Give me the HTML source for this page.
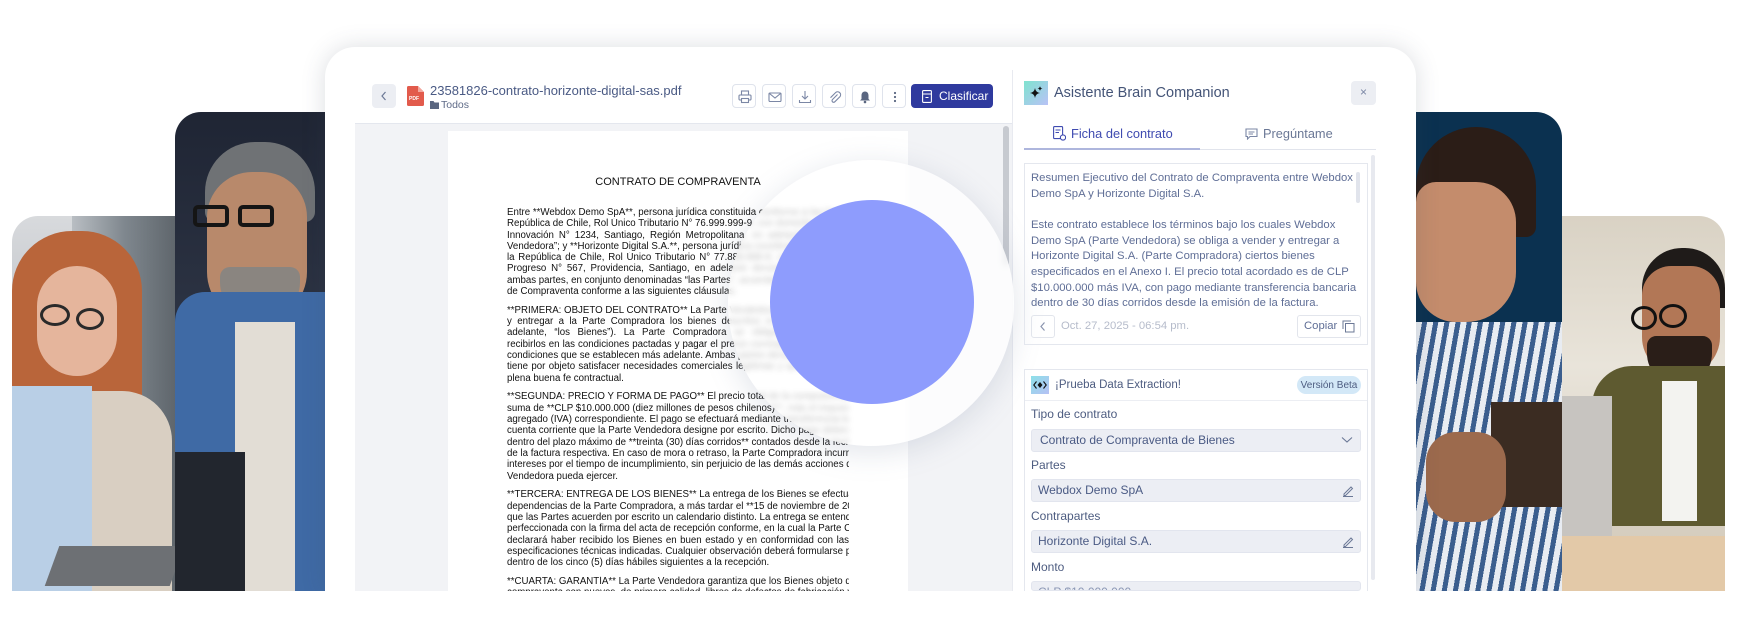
<!DOCTYPE html>
<html><head><meta charset="utf-8">
<style>
*{box-sizing:border-box;margin:0;padding:0}
html,body{width:1739px;height:637px;overflow:hidden}
body{background:#fff;position:relative;font-family:"Liberation Sans",Arial,sans-serif}
.abs{position:absolute}
.photo{position:absolute;overflow:hidden}
.card{position:absolute;left:325px;top:47px;width:1091px;height:544px;background:#fff;border-radius:30px 30px 0 0;box-shadow:0 0 24px rgba(60,70,90,.18)}
.ib{position:absolute;top:84px;width:24px;height:24px;border:1px solid #dfe3ec;border-radius:4px;background:#fff}
.ib svg{position:absolute;left:5px;top:5px}
.doc{font-family:"Liberation Sans",Arial,sans-serif;font-size:9.7px;color:#111;line-height:11.3px}
.doc div{white-space:nowrap;text-align:justify;text-align-last:justify;width:342px;height:11.3px;overflow:hidden}
.doc div.l{text-align-last:left}
.doc .gap{height:7.5px}
.sum{font-size:11.3px;color:#5f6e96;line-height:15.65px;white-space:nowrap}
.lbl{position:absolute;left:1031px;font-size:12px;color:#4d5c80}
.inp{position:absolute;left:1031px;width:330px;height:23px;background:#eceef4;border:1px solid #e2e5ee;border-radius:3px;font-size:12px;color:#4a5a84;padding-left:6px;line-height:21px}
</style></head><body>

<!-- left woman -->
<div class="photo" style="left:12px;top:216px;width:165px;height:375px;border-radius:26px 0 0 0;background:linear-gradient(180deg,#d8dadd 0%,#c9ccd0 20%,#a9aeb4 40%,#8c9096 100%)">
  <div class="abs" style="left:60px;top:0;width:105px;height:375px;background:linear-gradient(90deg,#b9bec3,#7f878e 50%,#5e656b)"></div>
  <div class="abs" style="left:0;top:15px;width:130px;height:230px;border-radius:60px 60px 30px 30px;background:#b9653a"></div>
  <div class="abs" style="left:25px;top:50px;width:80px;height:110px;border-radius:40px;background:#e5b59c"></div>
  <div class="abs" style="left:28px;top:88px;width:30px;height:22px;border:3px solid #2a2a2a;border-radius:50%"></div>
  <div class="abs" style="left:64px;top:92px;width:28px;height:22px;border:3px solid #2a2a2a;border-radius:50%"></div>
  <div class="abs" style="left:0;top:175px;width:160px;height:200px;border-radius:40px 50px 0 0;background:#d9cfc2"></div>
  <div class="abs" style="left:0;top:170px;width:80px;height:205px;background:#b9cfe6"></div>
  <div class="abs" style="left:40px;top:330px;width:125px;height:40px;background:#6d7074;transform:skewX(-20deg)"></div>
</div>
<!-- man -->
<div class="photo" style="left:175px;top:112px;width:150px;height:479px;border-radius:26px 0 0 0;background:linear-gradient(180deg,#1f2534,#2b3242 40%,#2c3446)">
  <div class="abs" style="left:30px;top:30px;width:110px;height:80px;border-radius:50px 50px 10px 10px;background:#6f7275"></div>
  <div class="abs" style="left:32px;top:60px;width:100px;height:150px;border-radius:45px 45px 50px 50px;background:#b8896b"></div>
  <div class="abs" style="left:45px;top:155px;width:80px;height:55px;border-radius:10px 10px 40px 40px;background:#8a8580"></div>
  <div class="abs" style="left:18px;top:93px;width:36px;height:22px;border:4px solid #151515;border-radius:5px"></div>
  <div class="abs" style="left:63px;top:93px;width:36px;height:22px;border:4px solid #151515;border-radius:5px"></div>
  <div class="abs" style="left:0;top:180px;width:150px;height:299px;background:#3f6aa5;border-radius:30px 0 0 0"></div>
  <div class="abs" style="left:60px;top:210px;width:60px;height:269px;background:#e2ddd5"></div>
  <div class="abs" style="left:0;top:340px;width:70px;height:139px;background:#22262e"></div>
</div>
<!-- right woman -->
<div class="photo" style="left:1416px;top:112px;width:146px;height:479px;border-radius:0 26px 0 0;background:#0b3150">
  <div class="abs" style="left:0;top:15px;width:120px;height:110px;border-radius:60px 60px 10px 10px;background:#2b1d17"></div>
  <div class="abs" style="left:0;top:70px;width:100px;height:140px;border-radius:20px 40px 50px 40px;background:#c48c6c"></div>
  <div class="abs" style="left:0;top:210px;width:146px;height:269px;background:repeating-linear-gradient(100deg,#e8ecf2 0 6px,#3b5e8e 6px 11px)"></div>
  <div class="abs" style="left:75px;top:290px;width:71px;height:105px;background:#3b2c22"></div>
  <div class="abs" style="left:10px;top:320px;width:80px;height:90px;border-radius:30px;background:#9c6a4d"></div>
</div>
<!-- right man -->
<div class="photo" style="left:1562px;top:216px;width:163px;height:375px;border-radius:0 26px 0 0;background:linear-gradient(180deg,#d9d2c4,#e9e4da 40%,#cfc6b6)">
  <div class="abs" style="left:80px;top:32px;width:83px;height:60px;border-radius:40px 40px 0 0;background:#1f1b19"></div>
  <div class="abs" style="left:80px;top:50px;width:78px;height:110px;border-radius:30px 30px 40px 40px;background:#b27756"></div>
  <div class="abs" style="left:85px;top:120px;width:65px;height:50px;border-radius:10px 10px 35px 35px;background:#2a1e18"></div>
  <div class="abs" style="left:69px;top:90px;width:26px;height:24px;border:3px solid #111;border-radius:50%"></div>
  <div class="abs" style="left:97px;top:88px;width:28px;height:24px;border:3px solid #111;border-radius:50%"></div>
  <div class="abs" style="left:30px;top:150px;width:133px;height:160px;border-radius:40px 0 0 0;background:#5e5a30"></div>
  <div class="abs" style="left:100px;top:165px;width:35px;height:140px;background:#f3f3f0"></div>
  <div class="abs" style="left:0;top:180px;width:50px;height:150px;background:#c7c4c0"></div>
  <div class="abs" style="left:0;top:320px;width:163px;height:55px;background:#e3c9a8"></div>
</div>

<div class="card"></div>

<!-- header left -->
<div class="abs" style="left:372px;top:84px;width:24px;height:24px;background:#eceef3;border-radius:4px"></div>
<svg class="abs" style="left:379px;top:90px" width="10" height="12"><path d="M6.5 2 L3 6 L6.5 10" stroke="#6b7896" stroke-width="1.2" fill="none"/></svg>
<svg class="abs" style="left:407px;top:86px" width="17" height="20"><path d="M0 1.5Q0 0 1.5 0H11L17 6V18.5Q17 20 15.5 20H1.5Q0 20 0 18.5Z" fill="#e25b4c"/><path d="M11 0V6H17" fill="#f3a79d"/><text x="2" y="14" font-size="5" fill="#fff" font-family="Liberation Sans" font-weight="bold">PDF</text></svg>
<div class="abs" style="left:430px;top:83px;font-size:13px;color:#4a5a84;white-space:nowrap">23581826-contrato-horizonte-digital-sas.pdf</div>
<svg class="abs" style="left:430px;top:101px" width="9" height="8"><path d="M0 0H3.5L4.5 1.5H9V8H0Z" fill="#5a6680"/></svg>
<div class="abs" style="left:441px;top:99px;font-size:10.5px;color:#5f6b88">Todos</div>

<div class="ib" style="left:732px"><svg width="14" height="14"><rect x="3.5" y="1" width="7" height="4" fill="none" stroke="#7b87a5" stroke-width="1.1"/><rect x="1" y="5" width="12" height="5" rx="1" fill="none" stroke="#7b87a5" stroke-width="1.1"/><rect x="3.5" y="8.5" width="7" height="4" fill="#fff" stroke="#7b87a5" stroke-width="1.1"/></svg></div>
<div class="ib" style="left:762px"><svg width="14" height="14"><rect x="1" y="3" width="12" height="8.5" rx="1" fill="none" stroke="#7b87a5" stroke-width="1.1"/><path d="M1.5 3.5L7 8L12.5 3.5" fill="none" stroke="#7b87a5" stroke-width="1.1"/></svg></div>
<div class="ib" style="left:792px"><svg width="14" height="14"><path d="M7 1V9M4 6L7 9L10 6M1.5 10V12.5H12.5V10" fill="none" stroke="#7b87a5" stroke-width="1.1"/></svg></div>
<div class="ib" style="left:822px"><svg width="14" height="14"><path d="M9.5 4.5L4.5 9.5a1.6 1.6 0 0 0 2.3 2.3L12 6.6a3 3 0 0 0-4.2-4.2L2.5 7.7" fill="none" stroke="#7b87a5" stroke-width="1.1"/></svg></div>
<div class="ib" style="left:852px"><svg width="14" height="14"><path d="M7 1.5C4.5 1.5 3.5 3.5 3.5 5.5V9L2 10.5H12L10.5 9V5.5C10.5 3.5 9.5 1.5 7 1.5Z" fill="#5a6680"/><circle cx="7" cy="12" r="1.3" fill="#5a6680"/></svg></div>
<div class="ib" style="left:882px"><svg width="14" height="14"><circle cx="7" cy="3" r="1.1" fill="#5a6680"/><circle cx="7" cy="7" r="1.1" fill="#5a6680"/><circle cx="7" cy="11" r="1.1" fill="#5a6680"/></svg></div>
<div class="abs" style="left:911px;top:84px;width:82px;height:24px;background:#2f3a9e;border-radius:4px"></div>
<svg class="abs" style="left:922px;top:90px" width="10" height="13"><rect x="0.6" y="0.6" width="8.8" height="11.8" rx="1" fill="none" stroke="#fff" stroke-width="1.1"/><path d="M0.6 4H9.4M3.5 7.5H6.5" stroke="#fff" stroke-width="1.1"/></svg>
<div class="abs" style="left:939px;top:89px;font-size:12px;color:#fff">Clasificar</div>

<!-- divider -->
<div class="abs" style="left:355px;top:123px;width:657px;height:1px;background:#e4e7ee"></div>
<div class="abs" style="left:1012px;top:70px;width:1px;height:521px;background:#e8eaf0"></div>

<!-- doc area -->
<div class="abs" style="left:355px;top:124px;width:657px;height:467px;background:#f2f3f6"></div>
<div class="abs" style="left:1003px;top:126px;width:6px;height:140px;background:#c7cad0;border-radius:3px"></div>
<div class="abs" style="left:448px;top:131px;width:460px;height:460px;background:#fff"></div>
<div class="abs" style="left:448px;top:176px;width:460px;text-align:center;font-size:11px;color:#111">CONTRATO DE COMPRAVENTA</div>
<div class="abs doc" style="left:507px;top:207px">
<div>Entre **Webdox Demo SpA**, persona jurídica constituida conforme a las leyes de la</div>
<div>República de Chile, Rol Único Tributario N° 76.999.999-9, con domicilio en Avenida</div>
<div>Innovación N° 1234, Santiago, Región Metropolitana, en adelante la “Parte</div>
<div>Vendedora”; y **Horizonte Digital S.A.**, persona jurídica constituida conforme a</div>
<div>la República de Chile, Rol Único Tributario N° 77.888.888-8, con domicilio en</div>
<div>Progreso N° 567, Providencia, Santiago, en adelante denominada la “Parte</div>
<div>ambas partes, en conjunto denominadas “las Partes”, acuerdan celebrar el presente</div>
<div class="l">de Compraventa conforme a las siguientes cláusulas.</div>
<div class="gap"></div>
<div>**PRIMERA: OBJETO DEL CONTRATO** La Parte Vendedora se obliga a vender</div>
<div>y entregar a la Parte Compradora los bienes descritos en el Anexo I (en</div>
<div>adelante, “los Bienes”). La Parte Compradora se obliga, a su vez, a</div>
<div>recibirlos en las condiciones pactadas y pagar el precio correspondiente en las</div>
<div>condiciones que se establecen más adelante. Ambas partes declaran que el contrato</div>
<div>tiene por objeto satisfacer necesidades comerciales legítimas y que actúan de</div>
<div class="l">plena buena fe contractual.</div>
<div class="gap"></div>
<div>**SEGUNDA: PRECIO Y FORMA DE PAGO** El precio total de la compraventa asciende a la</div>
<div>suma de **CLP $10.000.000 (diez millones de pesos chilenos)**, más el impuesto al valor</div>
<div>agregado (IVA) correspondiente. El pago se efectuará mediante transferencia bancaria a la</div>
<div>cuenta corriente que la Parte Vendedora designe por escrito. Dicho pago deberá realizarse</div>
<div>dentro del plazo máximo de **treinta (30) días corridos** contados desde la fecha de emisión</div>
<div>de la factura respectiva. En caso de mora o retraso, la Parte Compradora incurrirá en</div>
<div>intereses por el tiempo de incumplimiento, sin perjuicio de las demás acciones que la Parte</div>
<div class="l">Vendedora pueda ejercer.</div>
<div class="gap"></div>
<div>**TERCERA: ENTREGA DE LOS BIENES** La entrega de los Bienes se efectuará en las</div>
<div>dependencias de la Parte Compradora, a más tardar el **15 de noviembre de 2024**, salvo</div>
<div>que las Partes acuerden por escrito un calendario distinto. La entrega se entenderá</div>
<div>perfeccionada con la firma del acta de recepción conforme, en la cual la Parte Compradora</div>
<div>declarará haber recibido los Bienes en buen estado y en conformidad con las</div>
<div>especificaciones técnicas indicadas. Cualquier observación deberá formularse por escrito</div>
<div class="l">dentro de los cinco (5) días hábiles siguientes a la recepción.</div>
<div class="gap"></div>
<div>**CUARTA: GARANTÍA** La Parte Vendedora garantiza que los Bienes objeto de la presente</div>
<div>compraventa son nuevos, de primera calidad, libres de defectos de fabricación y de cualquier</div>
</div>
<!-- halo & blur -->
<div class="abs" style="left:728px;top:160px;width:286px;height:286px;border-radius:50%;background:rgba(255,255,255,.72);box-shadow:0 6px 30px rgba(120,130,160,.22);backdrop-filter:blur(3px)"></div>
<div class="abs" style="left:770px;top:200px;width:204px;height:204px;border-radius:50%;background:#8e9cfd"></div>

<!-- right panel -->
<div class="abs" style="left:1024px;top:81px;width:24px;height:24px;background:linear-gradient(135deg,#7fe3cf,#b9c2f6)"></div>
<svg class="abs" style="left:1028px;top:85px" width="16" height="16"><path d="M7 3Q7.6 7.4 12 8Q7.6 8.6 7 13Q6.4 8.6 2 8Q6.4 7.4 7 3Z" fill="#111"/><path d="M12 1Q12.3 3.2 14.5 3.5Q12.3 3.8 12 6Q11.7 3.8 9.5 3.5Q11.7 3.2 12 1Z" fill="#111"/></svg>
<div class="abs" style="left:1054px;top:85px;font-size:14.5px;color:#445477;white-space:nowrap">Asistente Brain Companion</div>
<div class="abs" style="left:1351px;top:81px;width:25px;height:24px;background:#eceef3;border-radius:4px;text-align:center;font-size:12px;line-height:23px;color:#7b87a5">×</div>

<svg class="abs" style="left:1053px;top:126px" width="13" height="15"><rect x="0.6" y="0.6" width="9" height="12" rx="1" fill="none" stroke="#3f4bb0" stroke-width="1.1"/><path d="M2.5 4H7.5M2.5 6.5H6" stroke="#3f4bb0" stroke-width="1.1"/><circle cx="10" cy="11.5" r="2.6" fill="#fff" stroke="#3f4bb0" stroke-width="1.1"/></svg>
<div class="abs" style="left:1071px;top:126px;font-size:12.8px;color:#3f4bb0">Ficha del contrato</div>
<svg class="abs" style="left:1245px;top:128px" width="13" height="12"><path d="M1 1H12V8.5H5L2.5 11V8.5H1Z" fill="none" stroke="#7b87a5" stroke-width="1.1"/><path d="M3.5 4H9.5M3.5 6H8" stroke="#7b87a5" stroke-width="1"/></svg>
<div class="abs" style="left:1263px;top:126px;font-size:12.8px;color:#6b7896">Pregúntame</div>
<div class="abs" style="left:1024px;top:149px;width:352px;height:1px;background:#e1e4ec"></div>
<div class="abs" style="left:1024px;top:148px;width:176px;height:2px;background:#aeb6dd"></div>
<div class="abs" style="left:1371px;top:155px;width:4px;height:425px;background:#e7e9ef;border-radius:2px"></div>

<div class="abs" style="left:1024px;top:163px;width:344px;height:182px;border:1px solid #e4e7ee"></div>
<div class="abs" style="left:1356px;top:172px;width:4px;height:31px;background:#e1e4ec;border-radius:2px"></div>
<div class="abs sum" style="left:1031px;top:171px">Resumen Ejecutivo del Contrato de Compraventa entre Webdox<br>Demo SpA y Horizonte Digital S.A.<br><br>Este contrato establece los términos bajo los cuales Webdox<br>Demo SpA (Parte Vendedora) se obliga a vender y entregar a<br>Horizonte Digital S.A. (Parte Compradora) ciertos bienes<br>especificados en el Anexo I. El precio total acordado es de CLP<br>$10.000.000 más IVA, con pago mediante transferencia bancaria<br>dentro de 30 días corridos desde la emisión de la factura.</div>
<div class="abs" style="left:1031px;top:315px;width:24px;height:23px;border:1px solid #e2e5ec;border-radius:3px"></div>
<svg class="abs" style="left:1038px;top:321px" width="10" height="12"><path d="M6.5 1.5L3 5.5L6.5 9.5" stroke="#8a94ae" stroke-width="1.2" fill="none"/></svg>
<div class="abs" style="left:1061px;top:320px;font-size:11.3px;color:#b6bccb;white-space:nowrap">Oct. 27, 2025 - 06:54 pm.</div>
<div class="abs" style="left:1297px;top:315px;width:64px;height:23px;border:1px solid #e2e5ec;border-radius:3px"></div>
<div class="abs" style="left:1304px;top:320px;font-size:11.3px;color:#5f6e96">Copiar</div>
<svg class="abs" style="left:1342px;top:320px" width="13" height="13"><path d="M1 9V1H9" fill="none" stroke="#6b7896" stroke-width="1"/><rect x="3.5" y="3.5" width="8.5" height="8.5" fill="none" stroke="#6b7896" stroke-width="1"/></svg>

<div class="abs" style="left:1024px;top:369px;width:344px;height:222px;border:1px solid #e4e7ee;border-bottom:none"></div>
<div class="abs" style="left:1031px;top:376px;width:18px;height:18px;background:linear-gradient(135deg,#8ce0e8,#b6c0f4)"></div>
<svg class="abs" style="left:1033px;top:380px" width="14" height="10"><path d="M3.5 1.5L0.8 5L3.5 8.5M10.5 1.5L13.2 5L10.5 8.5" fill="none" stroke="#111" stroke-width="1.1"/><path d="M7 2L9.5 5L7 8L4.5 5Z" fill="#111"/></svg>
<div class="abs" style="left:1055px;top:379px;font-size:11.5px;color:#4d5c80">¡Prueba Data Extraction!</div>
<div class="abs" style="left:1297px;top:376px;width:64px;height:18px;background:#d3e8f7;border-radius:9px;font-size:10px;color:#4d5c80;text-align:center;line-height:19px">Versión Beta</div>
<div class="abs" style="left:1025px;top:400px;width:342px;height:1px;background:#eceef3"></div>
<div class="lbl" style="top:407px">Tipo de contrato</div>
<div class="inp" style="top:429px;padding-left:8px">Contrato de Compraventa de Bienes</div>
<svg class="abs" style="left:1341px;top:436px" width="12" height="8"><path d="M1 1.5L6 6L11 1.5" fill="none" stroke="#6b7896" stroke-width="1.1"/></svg>
<div class="lbl" style="top:458px">Partes</div>
<div class="inp" style="top:479px">Webdox Demo SpA</div>
<div class="lbl" style="top:509px">Contrapartes</div>
<div class="inp" style="top:530px">Horizonte Digital S.A.</div>
<div class="lbl" style="top:560px">Monto</div>
<div class="inp" style="top:581px;height:10px;overflow:hidden;color:#8a96b4">CLP $10.000.000</div>
<svg class="abs" style="left:1342px;top:485px" width="12" height="12"><path d="M2 9L9 2L10.5 3.5L3.5 10.5H2Z M1 11.5H11" fill="none" stroke="#6b7896" stroke-width="1"/></svg>
<svg class="abs" style="left:1342px;top:536px" width="12" height="12"><path d="M2 9L9 2L10.5 3.5L3.5 10.5H2Z M1 11.5H11" fill="none" stroke="#6b7896" stroke-width="1"/></svg>

<!-- bottom white cut -->
<div class="abs" style="left:0;top:591px;width:1739px;height:46px;background:#fff;z-index:50"></div>
</body></html>
